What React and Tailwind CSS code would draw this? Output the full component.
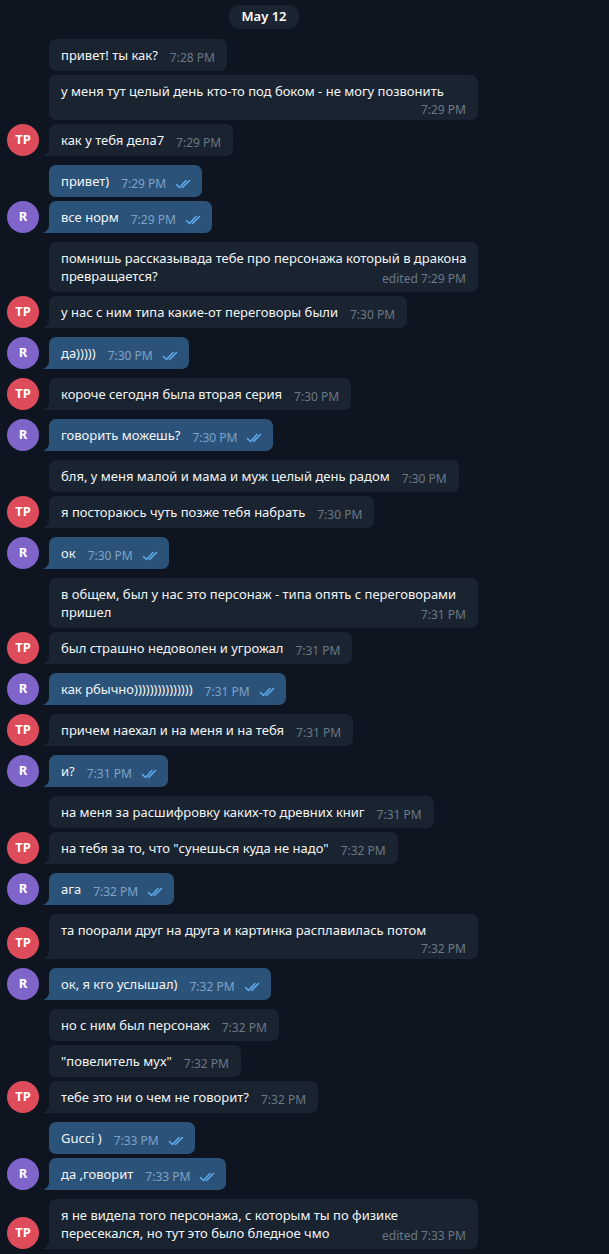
import React from 'react';

const msgs = [
  { me: false, text: 'привет! ты как?', time: '7:28 PM' },
  { me: false, text: 'у меня тут целый день кто-то под боком - не могу позвонить', time: '7:29 PM', below: true },
  { me: false, text: 'как у тебя дела7', time: '7:29 PM' },
  { me: true, text: 'привет)', time: '7:29 PM' },
  { me: true, text: 'все норм', time: '7:29 PM' },
  { me: false, text: 'помнишь рассказывада тебе про персонажа который в дракона\nпревращается?', time: 'edited 7:29 PM', wide: true },
  { me: false, text: 'у нас с ним типа какие-от переговоры были', time: '7:30 PM' },
  { me: true, text: 'да)))))', time: '7:30 PM' },
  { me: false, text: 'короче сегодня была вторая серия', time: '7:30 PM' },
  { me: true, text: 'говорить можешь?', time: '7:30 PM' },
  { me: false, text: 'бля, у меня малой и мама и муж целый день радом', time: '7:30 PM' },
  { me: false, text: 'я постораюсь чуть позже тебя набрать', time: '7:30 PM' },
  { me: true, text: 'ок', time: '7:30 PM' },
  { me: false, text: 'в общем, был у нас это персонаж - типа опять с переговорами\nпришел', time: '7:31 PM', wide: true },
  { me: false, text: 'был страшно недоволен и угрожал', time: '7:31 PM' },
  { me: true, text: 'как рбычно)))))))))))))))', time: '7:31 PM' },
  { me: false, text: 'причем наехал и на меня и на тебя', time: '7:31 PM' },
  { me: true, text: 'и?', time: '7:31 PM' },
  { me: false, text: 'на меня за расшифровку каких-то древних книг', time: '7:31 PM' },
  { me: false, text: 'на тебя за то, что "сунешься куда не надо"', time: '7:32 PM' },
  { me: true, text: 'ага', time: '7:32 PM' },
  { me: false, text: 'та поорали друг на друга и картинка расплавилась потом', time: '7:32 PM', below: true },
  { me: true, text: 'ок, я кго услышал)', time: '7:32 PM' },
  { me: false, text: 'но с ним был персонаж', time: '7:32 PM' },
  { me: false, text: '"повелитель мух"', time: '7:32 PM' },
  { me: false, text: 'тебе это ни о чем не говорит?', time: '7:32 PM' },
  { me: true, text: 'Gucci )', time: '7:33 PM' },
  { me: true, text: 'да ,говорит', time: '7:33 PM' },
  { me: false, text: 'я не видела того персонажа, с которым ты по физике\nпересекался, но тут это было бледное чмо', time: 'edited 7:33 PM', wide: true },
];

function Checks() {
  return (
    <svg width="18" height="10" viewBox="0 0 18 10" fill="none" stroke="#5eaaea" strokeWidth="1.6" strokeLinecap="round" strokeLinejoin="round">
      <path d="M1.5 5.5 L4.5 8.5 L11 1.5" />
      <path d="M7.5 8.5 L14.5 1.5" />
    </svg>
  );
}

function Meta({ m }) {
  return (
    <span className={`flex items-center h-[15px] text-[12px] leading-[15px] whitespace-nowrap ${m.me ? 'text-[#7fa3c8]' : 'text-[#6b7885]'}`}>
      {m.time}
      {m.me && (
        <span className="ml-[9px] -mr-[3px] flex">
          <Checks />
        </span>
      )}
    </span>
  );
}

function Tail({ color }) {
  return (
    <svg className="absolute -left-[6px] bottom-0" width="7" height="12" viewBox="0 0 7 12">
      <path d="M7 0 C7 6 4.5 10 0 12 H7 Z" fill={color} />
    </svg>
  );
}

function Bubble({ m, last }) {
  const bg = m.me ? '#2b5278' : '#1a2430';
  const round = last ? 'rounded-[7px] rounded-bl-none' : 'rounded-[7px]';
  let body;
  if (m.wide) {
    const lines = m.text.split('\n');
    body = (
      <div>
        <div className="whitespace-nowrap">{lines[0]}</div>
        <div className="flex justify-between items-start">
          <span className="whitespace-nowrap">{lines[1]}</span>
          <span className="mt-[4px] -mb-[1px]">
            <Meta m={m} />
          </span>
        </div>
      </div>
    );
  } else if (m.below) {
    body = (
      <div>
        <div className="whitespace-nowrap">{m.text}</div>
        <div className="flex justify-end mt-[2px] -mb-[2px] h-[13px] leading-[13px]">
          <Meta m={m} />
        </div>
      </div>
    );
  } else {
    body = (
      <div className="flex items-start gap-3 h-[18px]">
        <span className="whitespace-nowrap">{m.text}</span>
        <span className="mt-[4px]">
          <Meta m={m} />
        </span>
      </div>
    );
  }
  return (
    <div
      className={`relative ${round} px-3 pt-[7px] pb-[7px] text-[13px] leading-[18px] text-[#f3f5f7] ${m.wide || m.below ? 'w-[429px]' : 'w-fit max-w-[429px]'}`}
      style={{ backgroundColor: bg }}
    >
      {last && <Tail color={bg} />}
      {body}
    </div>
  );
}

function Avatar({ me }) {
  return (
    <div
      className={`w-[32px] h-[32px] rounded-full flex items-center justify-center text-white text-[13px] font-bold ${me ? 'bg-[#7f64c9]' : 'bg-[#de4c5b]'}`}
    >
      {me ? 'R' : 'TP'}
    </div>
  );
}

export default function App() {
  return (
    <div className="h-[1254px] w-[609px] overflow-hidden bg-[#0f1520]" style={{ fontFamily: '"Noto Sans", "Open Sans", sans-serif' }}>
      <div className="w-[528px] flex justify-center pt-[5px]">
        <div className="rounded-full bg-[#1b2531] px-[12px] h-[24px] flex items-center text-[13px] font-semibold text-white">
          May 12
        </div>
      </div>
      <div className="pt-[10px] flex flex-col">
        {msgs.map((m, i) => {
          const last = !msgs[i + 1] || msgs[i + 1].me !== m.me;
          const first = i === 0 || msgs[i - 1].me !== m.me;
          return (
            <div key={i} className={`flex items-end ${i === 0 ? '' : first ? 'mt-[9px]' : 'mt-[4px]'}`}>
              <div className="w-[49px] shrink-0 pl-[7px]">{last && <Avatar me={m.me} />}</div>
              <Bubble m={m} last={last} />
            </div>
          );
        })}
      </div>
    </div>
  );
}
